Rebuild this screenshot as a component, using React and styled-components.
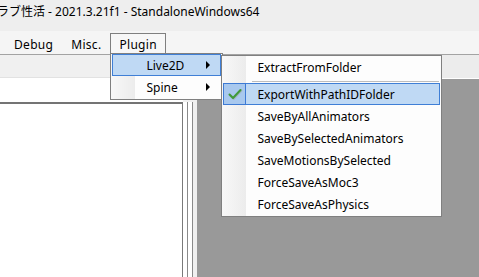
import React from 'react'
import styled, { createGlobalStyle } from 'styled-components'

const GlobalStyle = createGlobalStyle`
html, body {
    margin: 0;
    padding: 0;
    overflow: hidden;
    background: #f0f0f0;
}
`;

const Window = styled.div`
width: 479px;
height: 277px;
display: flex;
flex-direction: column;
overflow: hidden;
font-family: "Noto Sans", "Noto Sans CJK JP", sans-serif;
font-size: 12px;
color: #000;
`;

const TitleBar = styled.div`
height: 31px;
box-sizing: border-box;
padding-top: 4px;
background: #eeeeee;
white-space: nowrap;
overflow: hidden;
`;

const Title = styled.div`
margin-left: -3px;
line-height: 16px;
`;

const MenuBar = styled.div`
height: 24px;
box-sizing: border-box;
display: flex;
padding-left: 5px;
background: #f5f5f5;
border-bottom: 1px solid #a3a3a3;
position: relative;
z-index: 2;
`;

const MenuItem = styled.div`
position: relative;
margin-top: 2px;
height: 21px;
box-sizing: border-box;
display: flex;
align-items: center;
padding: 0 8px;
border: 1px solid ${p => (p.$open ? '#7f7f7f' : 'transparent')};
border-bottom: none;
background: ${p => (p.$open ? '#f7f7f7' : 'transparent')};
`;

const Caption = styled.span`
letter-spacing: 0.3px;
`;

const Menu = styled.div`
position: absolute;
top: ${p => p.$top};
left: ${p => p.$left};
width: ${p => p.$width}px;
box-sizing: border-box;
padding: 0 0 1px;
border: 1px solid #808080;
background: linear-gradient(to right, #f8f8f8 0, #ececec 24px, #fdfdfd 24px);
z-index: 5;
`;

const Row = styled.div`
position: relative;
height: 22px;
box-sizing: border-box;
margin: 0 1px;
display: flex;
align-items: center;
border: 1px solid ${p => (p.$active ? '#3f7fd6' : 'transparent')};
background: ${p => (p.$active ? '#bfd9f4' : 'transparent')};
white-space: nowrap;
`;

const IconCell = styled.div`
width: 22px;
flex: none;
align-self: stretch;
`;

const CheckCell = styled.div`
width: 23px;
flex: none;
align-self: stretch;
margin: -1px 0 -1px -1px;
box-sizing: border-box;
border: 1px solid #3d7ad4;
background: #a8c8ee;
display: flex;
align-items: center;
justify-content: center;
`;

const Label = styled.span`
margin-left: 11px;
`;

const Arrow = styled.span`
margin-left: auto;
margin-right: 10px;
width: 0;
height: 0;
border-left: 4px solid #000;
border-top: 4px solid transparent;
border-bottom: 4px solid transparent;
`;

const Separator = styled.div`
height: 1px;
margin: 3px 2px 1px 30px;
background: #bdbdbd;
`;

const Body = styled.div`
flex: 1;
display: flex;
min-height: 0;
`;

const LeftPane = styled.div`
width: 183px;
display: flex;
flex-direction: column;
`;

const TabStrip = styled.div`
height: 22px;
background: #f0f0f0;
border-bottom: 1px solid #e2e2e2;
`;

const FilterArea = styled.div`
height: 24px;
background: #fff;
`;

const ListBox = styled.div`
flex: 1;
background: #fff;
border-top: 2px solid #747474;
border-right: 1px solid #7a7a7a;
`;

const Splitter = styled.div`
width: 14px;
display: flex;
flex-direction: column;
`;

const SplitterTop = styled.div`
height: 47px;
background: #f0f0f0;
`;

const SplitterLines = styled.div`
flex: 1;
background: linear-gradient(to right, #fff 0 4px, #8a8a8a 4px 5px, #fff 5px 9px, #8a8a8a 9px 10px, #f0f0f0 10px);
`;

const RightPane = styled.div`
flex: 1;
display: flex;
flex-direction: column;
`;

const PreviewStrip = styled.div`
height: 23px;
background: #ececec;
border-bottom: 1px solid #fff;
`;

const Preview = styled.div`
flex: 1;
background: #999999;
`;

function Check() {
    return (
        <svg width="16" height="14" viewBox="0 0 16 14">
            <path d="M2.5 7.5 L6 11 L13.5 3" fill="none" stroke="#9aa39a" strokeWidth="2.6" strokeLinecap="round" strokeLinejoin="round" opacity="0.5" transform="translate(0.6 0.6)" />
            <path d="M2.5 7.5 L6 11 L13.5 3" fill="none" stroke="#3f9a3a" strokeWidth="2" strokeLinecap="round" strokeLinejoin="round" />
        </svg>
    )
}

const live2dItems = [
    'SaveByAllAnimators',
    'SaveBySelectedAnimators',
    'SaveMotionsBySelected',
    'ForceSaveAsMoc3',
    'ForceSaveAsPhysics',
]

export default function App() {
    return (
        <Window>
            <GlobalStyle />
            <TitleBar>
                <Title>ラブ性活 - 2021.3.21f1 - StandaloneWindows64</Title>
            </TitleBar>
            <MenuBar>
                <MenuItem><Caption>Debug</Caption></MenuItem>
                <MenuItem><Caption>Misc.</Caption></MenuItem>
                <MenuItem $open>
                    <Caption>Plugin</Caption>
                    <Menu $top="calc(100% - 1px)" $left="-1px" $width={113}>
                        <Row $active>
                            <IconCell />
                            <Label>Live2D</Label>
                            <Arrow />
                            <Menu $top="0px" $left="calc(100% + 1px)" $width={221}>
                                <Row>
                                    <IconCell />
                                    <Label>ExtractFromFolder</Label>
                                </Row>
                                <Separator />
                                <Row $active>
                                    <CheckCell><Check /></CheckCell>
                                    <Label>ExportWithPathIDFolder</Label>
                                </Row>
                                {live2dItems.map((item) => (
                                    <Row key={item}>
                                        <IconCell />
                                        <Label>{item}</Label>
                                    </Row>
                                ))}
                            </Menu>
                        </Row>
                        <Row>
                            <IconCell />
                            <Label>Spine</Label>
                            <Arrow />
                        </Row>
                    </Menu>
                </MenuItem>
            </MenuBar>
            <Body>
                <LeftPane>
                    <TabStrip />
                    <FilterArea />
                    <ListBox />
                </LeftPane>
                <Splitter>
                    <SplitterTop />
                    <SplitterLines />
                </Splitter>
                <RightPane>
                    <PreviewStrip />
                    <Preview />
                </RightPane>
            </Body>
        </Window>
    )
}
